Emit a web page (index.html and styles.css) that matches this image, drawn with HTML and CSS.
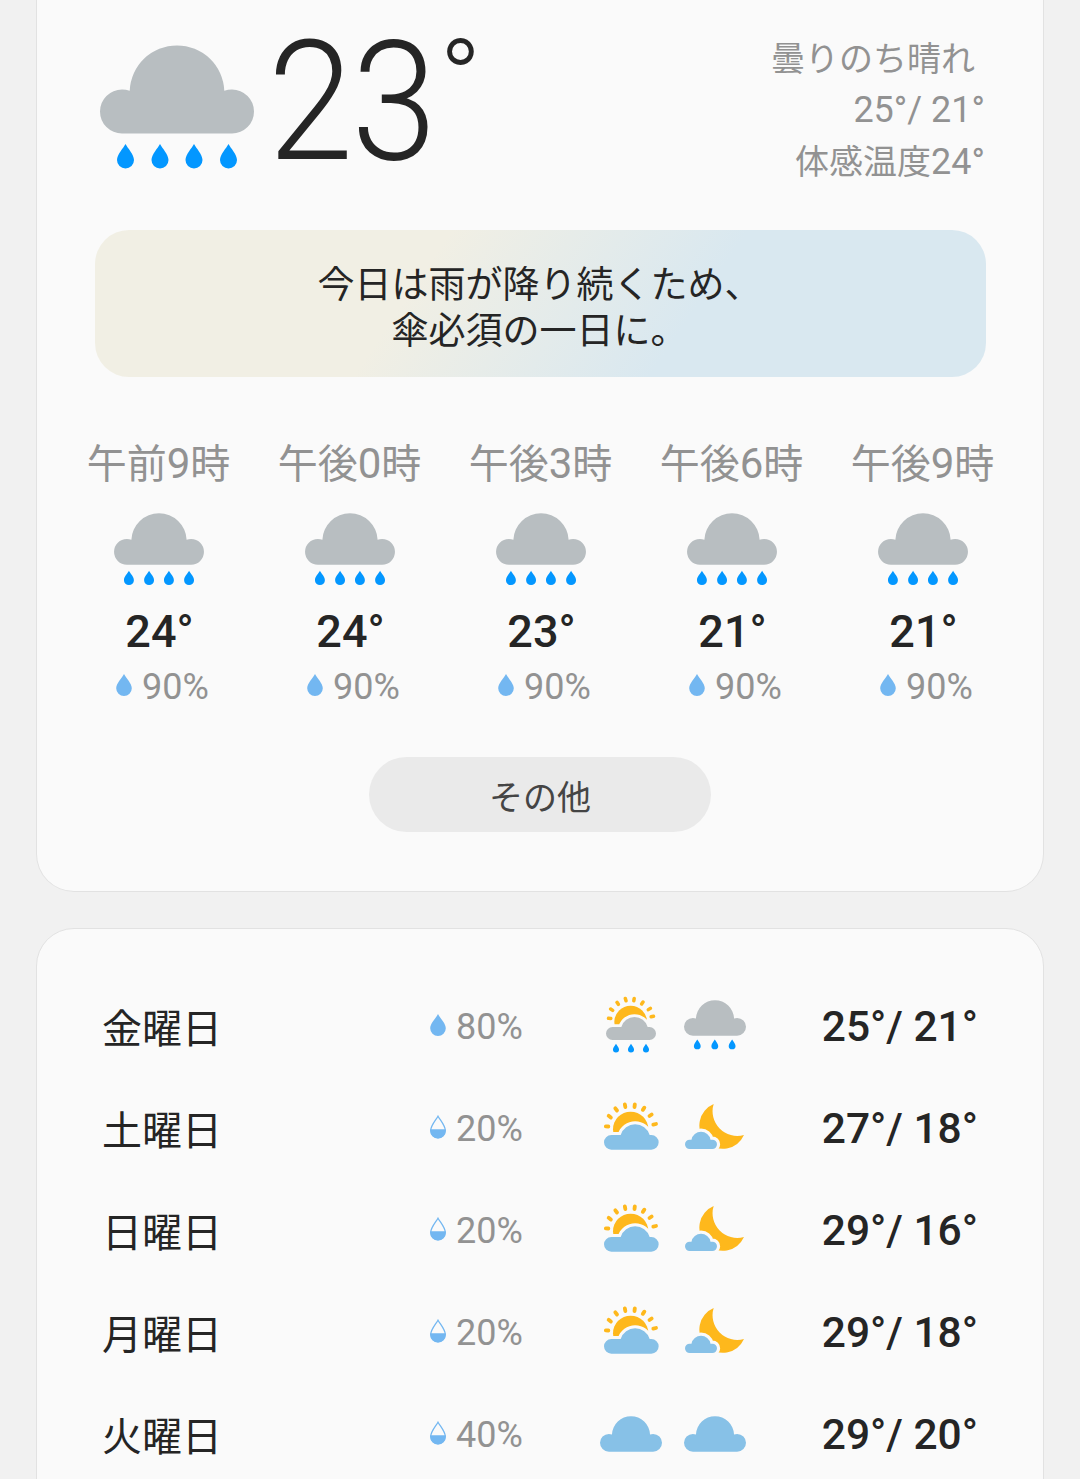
FILE: index.html
```html
<!DOCTYPE html>
<html lang="ja">
<head>
  <meta charset="UTF-8">
  <title>天気</title>
  <meta name="viewport" content="width=device-width, initial-scale=1.0">
  <link rel="stylesheet" href="styles.css">
</head>
<body>

  <!-- shared icons -->
  <svg class="defs" width="0" height="0">
    <defs>
      <path id="cloud" d="M22 88.5 A22 22 0 0 1 22 44.5 Q26 44.5 29.7 45.8 A47.34 47.34 0 0 1 124.3 45.8 Q128 44.5 132 44.5 A22 22 0 0 1 132 88.5 Z"/>
      <path id="rain" d="M0 0 C2 4 8.5 10.5 8.5 16 A8.5 8.5 0 0 1 -8.5 16 C-8.5 10.5 -2 4 0 0 Z"/>
      <symbol id="i-rain" viewBox="0 0 154 125">
        <use href="#cloud" fill="#b8bec1"/>
        <g fill="#0397ff">
          <use href="#rain" x="25.5" y="99"/>
          <use href="#rain" x="60" y="99"/>
          <use href="#rain" x="94" y="99"/>
          <use href="#rain" x="128.5" y="99"/>
        </g>
      </symbol>
      <symbol id="i-night-rain" viewBox="0 0 216 216">
        <g transform="translate(15 30) scale(1.208)">
          <use href="#cloud" fill="#b8bec1"/>
          <g fill="#0397ff">
            <use href="#rain" x="33" y="98"/>
            <use href="#rain" x="76.5" y="98"/>
            <use href="#rain" x="119.5" y="98"/>
          </g>
        </g>
      </symbol>
      <symbol id="i-cloud" viewBox="0 0 216 216">
        <use href="#cloud" fill="#87c1e7" transform="translate(15 54) scale(1.208)"/>
      </symbol>
      <symbol id="i-sun-rain" viewBox="15 30 216 216">
        <circle cx="122" cy="126" r="49" fill="#feb81c"/>
        <path d="M62.5 115.5 L55.5 115 M68 91 L62 87 M85 73 L81 67 M108 62.5 L106 55.5 M131.5 62.5 L132.5 55.5 M155 72 L159 66 M175 89 L181 85 M183.5 110.5 L190.5 109" stroke="#feb81c" stroke-width="10.5" stroke-linecap="round"/>
        <path d="M67.5 180 A19.5 19.5 0 0 1 67.5 141 H94 A41 41 0 0 1 173 141 H178.5 A19.5 19.5 0 0 1 178.5 180 Z" fill="#fafafa" stroke="#fafafa" stroke-width="17"/>
        <path d="M67.5 180 A19.5 19.5 0 0 1 67.5 141 H94 A41 41 0 0 1 173 141 H178.5 A19.5 19.5 0 0 1 178.5 180 Z" fill="#b8bec1"/>
        <g fill="#0397ff">
          <use href="#rain" transform="translate(78 191) scale(1.08)"/>
          <use href="#rain" transform="translate(123 191) scale(1.08)"/>
          <use href="#rain" transform="translate(168 191) scale(1.08)"/>
        </g>
      </symbol>
      <symbol id="i-sun" viewBox="15 336 216 216">
        <circle cx="122" cy="448" r="53" fill="#feb81c"/>
        <path d="M55 439.5 L47.5 439 M62.5 412.5 L56 407.5 M81 391.5 L76 385 M106 381 L104.5 373 M133.5 381 L134.5 373 M158.5 389.5 L163 383 M178.5 408 L185 403.5 M190 434 L198 432" stroke="#feb81c" stroke-width="11.5" stroke-linecap="round"/>
        <path d="M64 509 A22 22 0 0 1 64 465 H92 A45.5 45.5 0 0 1 179 465 H184 A22 22 0 0 1 184 509 Z" fill="#fafafa" stroke="#fafafa" stroke-width="18"/>
        <path d="M64 509 A22 22 0 0 1 64 465 H92 A45.5 45.5 0 0 1 179 465 H184 A22 22 0 0 1 184 509 Z" fill="#87c1e7"/>
      </symbol>
      <symbol id="i-moon" viewBox="267 336 216 216">
        <path d="M371 372 A74 74 0 0 0 462 465 A70 70 0 1 1 371 372 Z" fill="#feb81c"/>
        <path d="M299 507 A14 14 0 0 1 299 479 H304.5 A29 29 0 0 1 361.5 479 H367 A14 14 0 0 1 367 507 Z" fill="#fafafa" stroke="#fafafa" stroke-width="19"/>
        <path d="M299 507 A14 14 0 0 1 299 479 H304.5 A29 29 0 0 1 361.5 479 H367 A14 14 0 0 1 367 507 Z" fill="#87c1e7"/>
      </symbol>
      <symbol id="i-drop" viewBox="0 0 16 24">
        <path d="M8 1 C10 5 15.8 10.5 15.8 15.3 A7.8 7.6 0 0 1 .2 15.3 C.2 10.5 6 5 8 1 Z" fill="#73b7f1"/>
      </symbol>
      <symbol id="i-drop-half" viewBox="0 0 16 24">
        <path d="M8 1.2 C10 5 15.3 10.5 15.3 15.6 A7.3 7.3 0 0 1 .7 15.6 C.7 10.5 6 5 8 1.2 Z" fill="none" stroke="#73b7f1" stroke-width="1.3"/>
        <path d="M.3 14.2 H15.7 V15.6 A7.7 7.8 0 0 1 .3 15.6 Z" fill="#73b7f1"/>
      </symbol>
    </defs>
  </svg>

  <section class="card today">
    <div class="current">
      <svg class="current-icon"><use href="#i-rain"/></svg>
      <div class="current-temp"><span class="digits">23</span><span class="deg">°</span></div>
      <div class="summary">
        <div class="condition">曇りのち晴れ</div>
        <div>25°/ 21°</div>
        <div><span class="jp">体感温度</span>24°</div>
      </div>
    </div>

    <div class="notice">今日は雨が降り続くため、<br>傘必須の一日に。</div>

    <div class="hours">
      <div class="hour">
        <div class="time">午前<span class="num">9</span>時</div>
        <svg class="hour-icon"><use href="#i-rain"/></svg>
        <div class="temp">24°</div>
        <div class="chance"><svg class="drop"><use href="#i-drop"/></svg>90%</div>
      </div>
      <div class="hour">
        <div class="time">午後<span class="num">0</span>時</div>
        <svg class="hour-icon"><use href="#i-rain"/></svg>
        <div class="temp">24°</div>
        <div class="chance"><svg class="drop"><use href="#i-drop"/></svg>90%</div>
      </div>
      <div class="hour">
        <div class="time">午後<span class="num">3</span>時</div>
        <svg class="hour-icon"><use href="#i-rain"/></svg>
        <div class="temp">23°</div>
        <div class="chance"><svg class="drop"><use href="#i-drop"/></svg>90%</div>
      </div>
      <div class="hour">
        <div class="time">午後<span class="num">6</span>時</div>
        <svg class="hour-icon"><use href="#i-rain"/></svg>
        <div class="temp">21°</div>
        <div class="chance"><svg class="drop"><use href="#i-drop"/></svg>90%</div>
      </div>
      <div class="hour">
        <div class="time">午後<span class="num">9</span>時</div>
        <svg class="hour-icon"><use href="#i-rain"/></svg>
        <div class="temp">21°</div>
        <div class="chance"><svg class="drop"><use href="#i-drop"/></svg>90%</div>
      </div>
    </div>

    <button type="button" class="more">その他</button>
  </section>

  <section class="card week">
    <div class="day">
      <div class="name">金曜日</div>
      <div class="chance"><svg class="drop"><use href="#i-drop"/></svg>80%</div>
      <div class="icons"><svg><use href="#i-sun-rain"/></svg><svg><use href="#i-night-rain"/></svg></div>
      <div class="range">25°/ 21°</div>
    </div>
    <div class="day">
      <div class="name">土曜日</div>
      <div class="chance"><svg class="drop"><use href="#i-drop-half"/></svg>20%</div>
      <div class="icons"><svg><use href="#i-sun"/></svg><svg><use href="#i-moon"/></svg></div>
      <div class="range">27°/ 18°</div>
    </div>
    <div class="day">
      <div class="name">日曜日</div>
      <div class="chance"><svg class="drop"><use href="#i-drop-half"/></svg>20%</div>
      <div class="icons"><svg><use href="#i-sun"/></svg><svg><use href="#i-moon"/></svg></div>
      <div class="range">29°/ 16°</div>
    </div>
    <div class="day">
      <div class="name">月曜日</div>
      <div class="chance"><svg class="drop"><use href="#i-drop-half"/></svg>20%</div>
      <div class="icons"><svg><use href="#i-sun"/></svg><svg><use href="#i-moon"/></svg></div>
      <div class="range">29°/ 18°</div>
    </div>
    <div class="day">
      <div class="name">火曜日</div>
      <div class="chance"><svg class="drop"><use href="#i-drop-half"/></svg>40%</div>
      <div class="icons"><svg><use href="#i-cloud"/></svg><svg><use href="#i-cloud"/></svg></div>
      <div class="range">29°/ 20°</div>
    </div>
  </section>

</body>
</html>
```

FILE: styles.css
```css
* { box-sizing: border-box; }
body {
  margin: 0;
  height: 1479px;
  overflow: hidden;
  padding: 0 36px;
  background: #f1f1f1;
  color: #252525;
  font-family: Roboto, "Noto Sans CJK JP", sans-serif;
}
svg { display: block; flex: none; }
.defs { position: absolute; }
.card { background: #fafafa; border: 1px solid #e2e2e2; }

/* today */
.today { height: 892px; border-top: none; border-radius: 0 0 38px 38px; }
.current { display: flex; height: 230px; padding: 0 58px 0 63px; }
.current-icon { width: 154px; height: 125px; margin-top: 45px; }
.current-temp { margin: 2px auto 0 14px; font-size: 167px; line-height: 200px; font-weight: 300; white-space: nowrap; }
.digits { display: inline-block; letter-spacing: -2px; transform: scaleX(.92); transform-origin: left; }
.deg { margin-left: -10px; font-size: 112px; line-height: 0; vertical-align: 41px; }
.summary { padding-top: 32px; text-align: right; font-size: 36px; line-height: 52px; color: #929292; }
.summary .condition { padding: 1px 10px 0 0; margin-bottom: -1px; font-size: 34px; }
.summary .jp { font-size: 34px; }

.notice {
  height: 147px;
  margin: 0 57px 0 58px;
  padding: 33px 2px 0 0;
  border-radius: 34px;
  background: linear-gradient(124deg, #f1efe4 36%, #d9e8f0 66%);
  text-align: center;
  font-size: 37px;
  line-height: 46px;
}

.hours { display: grid; grid-template-columns: repeat(5, 191px); padding: 61px 0 0 26px; }
.hour { display: flex; flex-direction: column; align-items: center; }
.time { height: 75px; font-size: 40px; line-height: 52px; color: #929292; white-space: nowrap; }
.time .num { font-size: 42px; }
.hour-icon { width: 90px; height: 73px; }
.temp { margin: 19px -2px 0 0; font-size: 45px; line-height: 53px; font-weight: 500; }
.chance { display: flex; align-items: center; gap: 10px; font-size: 36px; color: #929292; }
.hour .chance { margin: 8px -8px 0 0; line-height: 42px; }
.drop { width: 16px; height: 24px; margin-bottom: 5px; }

.more {
  display: block;
  width: 342px;
  height: 75px;
  margin: 49px auto 0;
  padding: 2px 0 0;
  border: none;
  border-radius: 38px;
  background: #eaeaea;
  color: #454545;
  font: 34px Roboto, "Noto Sans CJK JP", sans-serif;
}

/* week */
.week { height: 600px; margin-top: 36px; padding: 46px 65px 0 65px; border-radius: 38px; }
.day { display: grid; grid-template-columns: 328px 165px 156px 1fr; align-items: center; height: 102px; }
.day .chance { padding-top: 1px; }
.day .drop { margin-bottom: 3px; }
.name { font-size: 40px; }
.icons { display: flex; gap: 12px; }
.icons svg { width: 72px; height: 72px; }
.range { text-align: right; font-size: 42.5px; font-weight: 500; white-space: nowrap; }
```
